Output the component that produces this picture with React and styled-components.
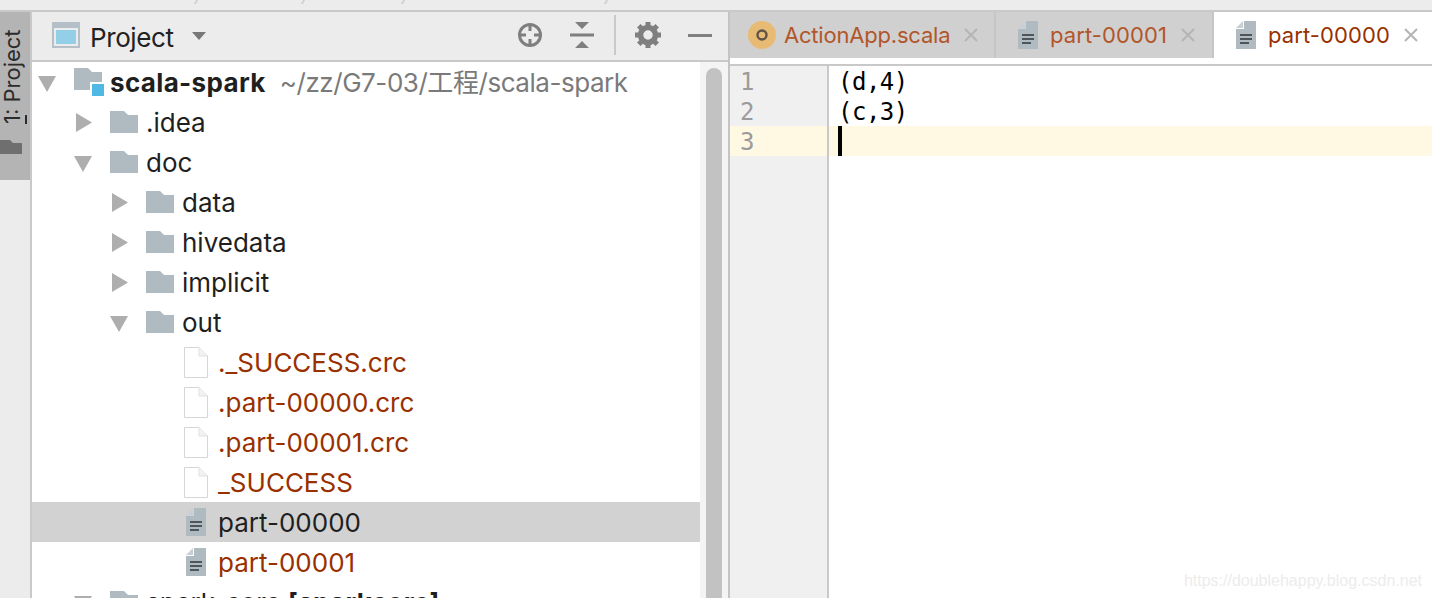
import React from "react";
import styled, { createGlobalStyle } from "styled-components";

const GlobalStyle = createGlobalStyle`
  html, body {
    margin: 0;
    padding: 0;
    background: #fff;
  }
  * {
    box-sizing: border-box;
  }
`;

const UI_FONT = `Inter, "Noto Sans CJK SC", sans-serif`;
const MONO_FONT = `"DejaVu Sans Mono", monospace`;

const Window = styled.div`
  position: relative;
  width: 1432px;
  height: 598px;
  overflow: hidden;
  display: flex;
  flex-direction: column;
  font-family: ${UI_FONT};
  background: #fff;
`;

const TopStrip = styled.div`
  height: 12px;
  flex: none;
  display: flex;
  align-items: flex-start;
  background: #ececec;
  border-bottom: 2px solid #c9c9c9;
`;

const Crumb = styled.span`
  width: ${(p) => p.$width}px;
  height: 4px;
  flex: none;
  display: flex;
  justify-content: flex-end;
  &::after {
    content: "";
    width: 2px;
    height: 4px;
    background: #cfcfcf;
    transform: skewX(-30deg);
  }
`;

const Main = styled.div`
  flex: 1;
  min-height: 0;
  display: flex;
`;

const SideBar = styled.div`
  width: 32px;
  flex: none;
  background: #ececec;
  border-right: 2px solid #c9c9c9;
`;

const StripeButton = styled.div`
  height: 168px;
  background: #b4b4b4;
  display: flex;
  flex-direction: column;
  align-items: flex-start;
  overflow: hidden;
`;

const StripeLabel = styled.div`
  writing-mode: vertical-rl;
  transform: rotate(180deg);
  height: 112px;
  width: 24px;
  font-size: 22px;
  line-height: 24px;
  color: #2b2b2b;
  white-space: nowrap;
  text-align: left;
  u {
    text-underline-offset: 1px;
  }
`;

const StripeFolder = styled.svg`
  display: block;
  margin-top: 16px;
`;

const ProjectPane = styled.div`
  width: 698px;
  flex: none;
  display: flex;
  flex-direction: column;
  border-right: 2px solid #c4c4c4;
`;

const Toolbar = styled.div`
  height: 50px;
  flex: none;
  display: flex;
  align-items: center;
  background: #ececec;
  border-bottom: 2px solid #c9c9c9;
  padding: 0 2px 2px 20px;
`;

const ToolbarTitle = styled.span`
  margin: 4px 0 0 10px;
  font-size: 26px;
  letter-spacing: -0.4px;
  color: #222;
`;

const DropCaret = styled.span`
  margin-left: 18px;
  margin-top: 1px;
  width: 0;
  height: 0;
  border-left: 7px solid transparent;
  border-right: 7px solid transparent;
  border-top: 8px solid #777;
`;

const ToolbarActions = styled.div`
  margin-left: auto;
  display: flex;
  align-items: center;
`;

const ToolButton = styled.span`
  width: 52px;
  height: 40px;
  display: flex;
  align-items: center;
  justify-content: center;
`;

const ToolSeparator = styled.span`
  width: 2px;
  height: 40px;
  margin: 0 6px;
  background: #c9c9c9;
`;

const TreeArea = styled.div`
  flex: 1;
  min-height: 0;
  display: flex;
`;

const Tree = styled.div`
  flex: 1;
  min-width: 0;
  overflow: hidden;
`;

const Row = styled.div`
  height: 40px;
  flex: none;
  display: flex;
  align-items: center;
  padding-left: ${(p) => 6 + p.$depth * 36}px;
  background: ${(p) => (p.$selected ? "#d2d2d2" : "transparent")};
  font-size: 26px;
  line-height: 40px;
  white-space: nowrap;
`;

const ArrowBox = styled.span`
  width: 36px;
  flex: none;
  display: flex;
  align-items: center;
`;

const ArrowShape = styled.svg`
  display: block;
  margin-top: ${(p) => (p.$open ? 3 : 1)}px;
`;

const IconBox = styled.span`
  width: 36px;
  flex: none;
  display: flex;
  align-items: center;
  padding-left: ${(p) => p.$inset || 0}px;
`;

const RowLabel = styled.span`
  color: ${(p) => (p.$ignored ? "#993000" : "#1f1f1f")};
  font-weight: ${(p) => (p.$bold ? 700 : 400)};
  letter-spacing: ${(p) => (p.$bold ? "0.35px" : "0")};
  margin-top: 2px;
`;

const RowPath = styled.span`
  margin: 2px 0 0 14px;
  color: #7a7a7a;
  letter-spacing: -0.45px;
`;

const ScrollTrack = styled.div`
  width: 28px;
  flex: none;
  background: #f4f4f4;
  padding: 6px 6px 0;
`;

const ScrollThumb = styled.div`
  width: 16px;
  height: 100%;
  background: #c2c2c2;
  border-radius: 8px 8px 0 0;
`;

const EditorPane = styled.div`
  flex: 1;
  min-width: 0;
  display: flex;
  flex-direction: column;
`;

const TabBar = styled.div`
  height: 54px;
  flex: none;
  display: flex;
  align-items: flex-start;
  border-bottom: 2px solid #c9c9c9;
`;

const Tab = styled.div`
  height: ${(p) => (p.$active ? 52 : 46)}px;
  width: ${(p) => (p.$active ? "auto" : `${p.$width}px`)};
  flex: ${(p) => (p.$active ? 1 : "none")};
  display: flex;
  align-items: center;
  padding-left: 18px;
  background: ${(p) => (p.$active ? "#fff" : "#d0d0d0")};
  border-right: ${(p) => (p.$active ? "none" : "2px solid #c6c6c6")};
  font-size: 22px;
  white-space: nowrap;
  padding-bottom: ${(p) => (p.$active ? 6 : 0)}px;
`;

const TabIcon = styled.span`
  width: 36px;
  flex: none;
  display: flex;
  align-items: center;
  padding-left: ${(p) => (p.$inset ? 4 : 0)}px;
`;

const TabLabel = styled.span`
  color: ${(p) => (p.$active ? "#993000" : "#b2562a")};
  letter-spacing: ${(p) => p.$tracking || 0}px;
`;

const TabClose = styled.svg`
  margin-left: 14px;
  flex: none;
  display: block;
`;

const EditorBody = styled.div`
  flex: 1;
  min-height: 0;
  display: flex;
  font-family: ${MONO_FONT};
  font-size: 24px;
`;

const Gutter = styled.div`
  width: 99px;
  flex: none;
  background: #f0f0f0;
  border-right: 2px solid #c9c9c9;
`;

const GutterLine = styled.div`
  height: 30px;
  line-height: 32px;
  padding-left: 10px;
  color: #9b9b9b;
  background: ${(p) => (p.$current ? "#fff8e3" : "transparent")};
`;

const Code = styled.div`
  flex: 1;
  min-width: 0;
`;

const CodeLine = styled.div`
  height: 30px;
  line-height: 32px;
  padding-left: 9px;
  color: #000;
  letter-spacing: -0.5px;
  background: ${(p) => (p.$current ? "#fff8e3" : "transparent")};
  white-space: pre;
`;

const Caret = styled.span`
  display: block;
  width: 4px;
  height: 30px;
  background: #000;
`;

const Watermark = styled.div`
  position: absolute;
  right: 10px;
  bottom: 7px;
  font-family: "Liberation Sans", sans-serif;
  font-size: 16px;
  line-height: 20px;
  color: #ececec;
`;

const Arrow = ({ open }) =>
  open ? (
    <ArrowShape $open width="18" height="16" viewBox="0 0 18 16">
      <path d="M0 0H18L9 16Z" fill="#aeaeae" />
    </ArrowShape>
  ) : (
    <ArrowShape width="18" height="19" viewBox="0 0 18 19">
      <path d="M2 0L18 9.5L2 19Z" fill="#aeaeae" />
    </ArrowShape>
  );

const Folder = () => (
  <svg width="28" height="22" viewBox="0 0 28 22" style={{ display: "block" }}>
    <path d="M0 0H14L18 4H28V22H0Z" fill="#afbac1" />
  </svg>
);

const RootFolder = () => (
  <svg width="30" height="28" viewBox="0 0 30 28" style={{ display: "block" }}>
    <path d="M0 0H14L18 4H28V22H0Z" fill="#afbac1" />
    <rect x="16" y="14" width="14" height="14" fill="#fff" />
    <rect x="18" y="16" width="12" height="12" fill="#4fb8e3" />
  </svg>
);

const BlankFile = () => (
  <svg width="24" height="31" viewBox="0 0 24 31" style={{ display: "block" }}>
    <path d="M0.5 0.5H15L23.5 9V30.5H0.5Z" fill="#fff" stroke="#d6d6d6" />
    <path d="M15 0.5V9H23.5" fill="#f2f2f2" stroke="#e2e2e2" />
  </svg>
);

const TextFile = () => (
  <svg width="20" height="28" viewBox="0 0 20 28" style={{ display: "block" }}>
    <path d="M8 0H20V28H0V8H8Z" fill="#afbac1" />
    <path d="M7 0V7H0Z" fill="#c9d0d5" />
    <path d="M4 13H16V15H4ZM4 17H16V19H4ZM4 21H13V23H4Z" fill="#4f5559" />
  </svg>
);

const ScalaBadge = () => (
  <svg width="28" height="28" viewBox="0 0 28 28" style={{ display: "block" }}>
    <circle cx="14" cy="14" r="14" fill="#e8bb75" />
    <circle cx="14" cy="14" r="4.5" fill="none" stroke="#5f5247" strokeWidth="2.4" />
  </svg>
);

const CloseIcon = () => (
  <TabClose width="14" height="14" viewBox="0 0 14 14">
    <path d="M1 1L13 13M13 1L1 13" stroke="#b5b5b5" strokeWidth="2" />
  </TabClose>
);

const WindowIcon = () => (
  <svg width="28" height="26" viewBox="0 0 28 26" style={{ display: "block" }}>
    <rect width="28" height="26" fill="#b5bfc7" />
    <rect x="2" y="6" width="24" height="18" fill="#ececec" />
    <rect x="4" y="8" width="20" height="14" fill="#93d0e8" />
  </svg>
);

const LocateIcon = () => (
  <svg width="26" height="26" viewBox="0 0 26 26" style={{ display: "block" }}>
    <circle cx="13" cy="13" r="10.5" fill="none" stroke="#7f7f7f" strokeWidth="3" />
    <path d="M13 2V9M13 17V24M2 13H9M17 13H24" stroke="#7f7f7f" strokeWidth="3" />
  </svg>
);

const CollapseIcon = () => (
  <svg width="24" height="26" viewBox="0 0 24 26" style={{ display: "block" }}>
    <path d="M5 0H19L12 7Z M0 11.5H24V14.5H0Z M12 19L19 26H5Z" fill="#7f7f7f" />
  </svg>
);

const GearIcon = () => (
  <svg width="26" height="26" viewBox="-13 -13 26 26" style={{ display: "block" }}>
    <circle r="7.5" fill="none" stroke="#7f7f7f" strokeWidth="5.5" />
    {[0, 45, 90, 135, 180, 225, 270, 315].map((a) => (
      <rect key={a} x="-2.5" y="-13" width="5" height="5" fill="#7f7f7f" transform={`rotate(${a})`} />
    ))}
  </svg>
);

const MinusIcon = () => (
  <svg width="24" height="3" viewBox="0 0 24 3" style={{ display: "block" }}>
    <rect width="24" height="3" fill="#7f7f7f" />
  </svg>
);

const tree = [
  { depth: 1, arrow: "closed", icon: "folder", label: ".idea" },
  { depth: 1, arrow: "open", icon: "folder", label: "doc" },
  { depth: 2, arrow: "closed", icon: "folder", label: "data" },
  { depth: 2, arrow: "closed", icon: "folder", label: "hivedata" },
  { depth: 2, arrow: "closed", icon: "folder", label: "implicit" },
  { depth: 2, arrow: "open", icon: "folder", label: "out" },
  { depth: 3, icon: "blank", label: "._SUCCESS.crc", ignored: true },
  { depth: 3, icon: "blank", label: ".part-00000.crc", ignored: true },
  { depth: 3, icon: "blank", label: ".part-00001.crc", ignored: true },
  { depth: 3, icon: "blank", label: "_SUCCESS", ignored: true },
  { depth: 3, icon: "text", label: "part-00000", selected: true },
  { depth: 3, icon: "text", label: "part-00001", ignored: true },
];

const rowIcons = { folder: Folder, blank: BlankFile, text: TextFile };
const iconInsets = { folder: 0, blank: 2, text: 4 };
const crumbWidths = [197, 107, 100, 203];

const App = () => (
  <>
    <GlobalStyle />
    <Window>
      <TopStrip>
        {crumbWidths.map((w, i) => (
          <Crumb key={i} $width={w} />
        ))}
      </TopStrip>
      <Main>
        <SideBar>
          <StripeButton>
            <StripeLabel>
              <u>1</u>: Project
            </StripeLabel>
            <StripeFolder width="22" height="14" viewBox="0 0 22 14">
              <path d="M0 0H10L13 3H22V14H0Z" fill="#6f6f6f" />
            </StripeFolder>
          </StripeButton>
        </SideBar>

        <ProjectPane>
          <Toolbar>
            <WindowIcon />
            <ToolbarTitle>Project</ToolbarTitle>
            <DropCaret />
            <ToolbarActions>
              <ToolButton>
                <LocateIcon />
              </ToolButton>
              <ToolButton>
                <CollapseIcon />
              </ToolButton>
              <ToolSeparator />
              <ToolButton>
                <GearIcon />
              </ToolButton>
              <ToolButton>
                <MinusIcon />
              </ToolButton>
            </ToolbarActions>
          </Toolbar>
          <TreeArea>
            <Tree>
              <Row $depth={0}>
                <ArrowBox>
                  <Arrow open />
                </ArrowBox>
                <IconBox>
                  <RootFolder />
                </IconBox>
                <RowLabel $bold>scala-spark</RowLabel>
                <RowPath>~/zz/G7-03/工程/scala-spark</RowPath>
              </Row>
              {tree.map((item) => {
                const Icon = rowIcons[item.icon];
                return (
                  <Row key={item.label} $depth={item.depth} $selected={item.selected}>
                    <ArrowBox>{item.arrow && <Arrow open={item.arrow === "open"} />}</ArrowBox>
                    <IconBox $inset={iconInsets[item.icon]}>
                      <Icon />
                    </IconBox>
                    <RowLabel $ignored={item.ignored}>{item.label}</RowLabel>
                  </Row>
                );
              })}
              <Row $depth={1}>
                <ArrowBox>
                  <Arrow open />
                </ArrowBox>
                <IconBox>
                  <Folder />
                </IconBox>
                <RowLabel>spark-core&nbsp;</RowLabel>
                <RowLabel $bold>[sparkcore]</RowLabel>
              </Row>
            </Tree>
            <ScrollTrack>
              <ScrollThumb />
            </ScrollTrack>
          </TreeArea>
        </ProjectPane>

        <EditorPane>
          <TabBar>
            <Tab $width={266}>
              <TabIcon>
                <ScalaBadge />
              </TabIcon>
              <TabLabel $tracking={-0.2}>ActionApp.scala</TabLabel>
              <CloseIcon />
            </Tab>
            <Tab $width={218}>
              <TabIcon $inset>
                <TextFile />
              </TabIcon>
              <TabLabel $tracking={0.1}>part-00001</TabLabel>
              <CloseIcon />
            </Tab>
            <Tab $active>
              <TabIcon $inset>
                <TextFile />
              </TabIcon>
              <TabLabel $active $tracking={0.1}>part-00000</TabLabel>
              <CloseIcon />
            </Tab>
          </TabBar>
          <EditorBody>
            <Gutter>
              <GutterLine>1</GutterLine>
              <GutterLine>2</GutterLine>
              <GutterLine $current>3</GutterLine>
            </Gutter>
            <Code>
              <CodeLine>(d,4)</CodeLine>
              <CodeLine>(c,3)</CodeLine>
              <CodeLine $current>
                <Caret />
              </CodeLine>
            </Code>
          </EditorBody>
        </EditorPane>
      </Main>
      <Watermark>https://doublehappy.blog.csdn.net</Watermark>
    </Window>
  </>
);

export default App;
